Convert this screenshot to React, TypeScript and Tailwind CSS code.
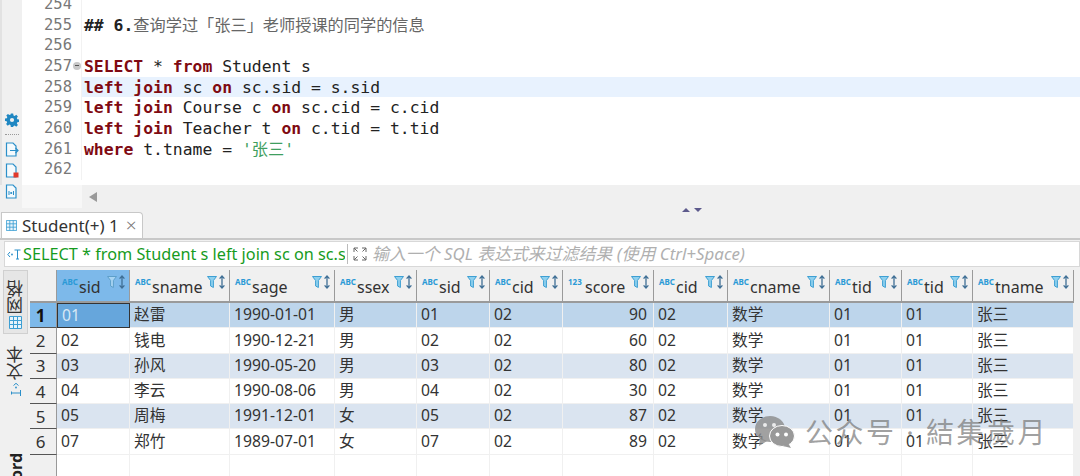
import React from "react";

const mono = "font-['DejaVu_Sans_Mono','Noto_Sans_CJK_SC',monospace]";
const ui = "font-['Noto_Sans','Noto_Sans_CJK_SC',sans-serif]";
const gridCols = "grid-cols-[27px_73px_100px_105px_82px_73px_73px_91px_74px_102px_72px_71px_101px]";

const K = ({ children }: { children: React.ReactNode }) => (
  <span className="font-bold text-[#7f0a12]">{children}</span>
);

const lines: { n: number; fold?: boolean; active?: boolean; c?: React.ReactNode }[] = [
  { n: 254 },
  { n: 255, c: <><span className="font-bold text-[#222]">## 6.</span><span className="text-[16.2px] text-[#666]">查询学过「张三」老师授课的同学的信息</span></> },
  { n: 256 },
  { n: 257, fold: true, c: <><K>SELECT</K> * <K>from</K> Student s</> },
  { n: 258, active: true, c: <><K>left join</K> sc <K>on</K> sc.sid = s.sid</> },
  { n: 259, c: <><K>left join</K> Course c <K>on</K> sc.cid = c.cid</> },
  { n: 260, c: <><K>left join</K> Teacher t <K>on</K> c.tid = t.tid</> },
  { n: 261, c: <><K>where</K> t.tname = <span className="text-[#3f9f5f]">'<span className="text-[16.2px]">张三</span>'</span></> },
  { n: 262 },
];

const columns: { name: string; kind?: string }[] = [
  { name: "sid" }, { name: "sname" }, { name: "sage" }, { name: "ssex" }, { name: "sid" }, { name: "cid" },
  { name: "score", kind: "123" }, { name: "cid" }, { name: "cname" }, { name: "tid" }, { name: "tid" }, { name: "tname" },
];

const rows = [
  ["01", "赵雷", "1990-01-01", "男", "01", "02", "90", "02", "数学", "01", "01", "张三"],
  ["02", "钱电", "1990-12-21", "男", "02", "02", "60", "02", "数学", "01", "01", "张三"],
  ["03", "孙风", "1990-05-20", "男", "03", "02", "80", "02", "数学", "01", "01", "张三"],
  ["04", "李云", "1990-08-06", "男", "04", "02", "30", "02", "数学", "01", "01", "张三"],
  ["05", "周梅", "1991-12-01", "女", "05", "02", "87", "02", "数学", "01", "01", "张三"],
  ["07", "郑竹", "1989-07-01", "女", "07", "02", "89", "02", "数学", "01", "01", "张三"],
];

const rowBg = ["bg-[#bdd5eb]", "bg-white", "bg-[#dae4f0]", "bg-white", "bg-[#dae4f0]", "bg-white"];

const FilterSort = ({ hollow }: { hollow?: boolean }) => (
  <svg width="19" height="14" viewBox="0 0 19 14" className="shrink-0">
    <path d="M0.500 1.500H9.500L6.400 5.500V12.500L3.600 11V5.500Z" fill={hollow ? "#a8d4f2" : "#8fd0ee"} stroke={hollow ? "#5d9fca" : "#3d9fd3"} />
    <path d="M15 1V13M12.600 3.600L15 1L17.400 3.600M12.600 10.400L15 13L17.400 10.400" fill="none" stroke="#3f6f95" strokeWidth="1.300" />
  </svg>
);

const GridIcon = ({ size = 13, color = "#3d9fd3" }: { size?: number; color?: string }) => (
  <svg width={size} height={size} viewBox="0 0 13 13" className="shrink-0">
    <path d="M0.500 0.500H12.500V12.500H0.500ZM0.500 4.500H12.500M0.500 8.500H12.500M4.500 0.500V12.500M8.500 0.500V12.500" fill="#e8f4fb" stroke={color} />
  </svg>
);

const Gear = () => (
  <svg width="14" height="14" viewBox="0 0 24 24" className="shrink-0">
    <path
      fill="#1f87c2"
      d="M10 1h4l.6 3.200 2 .8L19.300 3.200l2.800 2.800-1.800 2.700.8 2 3.200.6v4l-3.200.6-.8 2 1.800 2.700-2.800 2.800-2.700-1.800-2 .8L14 23.900h-4l-.6-3.200-2-.8-2.700 1.800-2.800-2.800 1.800-2.700-.8-2L0 13.600v-4l3.200-.6.8-2L2.200 4.300 5 1.500l2.700 1.800 2-.8Z"
    />
    <circle cx="12" cy="12" r="3.600" fill="#f0f0f0" />
  </svg>
);

const DocIcon = ({ variant }: { variant: "arrow" | "error" | "var" }) => (
  <svg width="14" height="15" viewBox="0 0 14 15" className="shrink-0">
    <path d="M1.500 1H8L11 4V14H1.500Z" fill="#f4fafd" stroke="#2b8fc9" strokeWidth="1.200" />
    {variant === "arrow" && <path d="M5 8.500H13M10.500 6L13 8.500L10.500 11" fill="none" stroke="#2b8fc9" strokeWidth="1.200" />}
    {variant === "error" && <rect x="8.500" y="9.500" width="5" height="5" fill="#e0392b" />}
    {variant === "var" && <path d="M4 7V11M8.500 7V11M5.500 8L7 10M7 8L5.500 10" fill="none" stroke="#2b8fc9" />}
  </svg>
);

const ExpandIcon = () => (
  <svg width="14" height="14" viewBox="0 0 14 14" className="shrink-0">
    <path d="M1 5V1H5M1 1L4.500 4.500M9 1H13V5M13 1L9.500 4.500M1 9V13H5M1 13L4.500 9.500M13 9V13H9M13 13L9.500 9.500" fill="none" stroke="#666" />
  </svg>
);

const TextIcon = () => (
  <svg width="14" height="11" viewBox="0 0 14 11" className="shrink-0">
    <path d="M3 3L0.800 5.500L3 8" fill="none" stroke="#2b8fc9" />
    <circle cx="5" cy="5.500" r="0.900" fill="#2b8fc9" />
    <path d="M7.500 1H13.500M10.500 1V10M9 10H12" fill="none" stroke="#2b8fc9" />
  </svg>
);

const Wechat = () => (
  <svg width="40" height="33" viewBox="0 0 40 33">
    <ellipse cx="15" cy="13" rx="15" ry="13" fill="#8a8a8a" fillOpacity="0.8" />
    <path d="M5 22L4 30L12 25Z" fill="#8a8a8a" fillOpacity="0.8" />
    <ellipse cx="27" cy="20" rx="12.500" ry="10.500" fill="#999" stroke="#fff" />
    <path d="M33 27L36 32L28 30Z" fill="#999" />
    <circle cx="22.500" cy="18.500" r="2" fill="#fff" />
    <circle cx="31" cy="18.500" r="2" fill="#fff" />
    <circle cx="10" cy="9" r="2" fill="#fff" fillOpacity="0.8" />
    <circle cx="19" cy="9" r="2" fill="#fff" fillOpacity="0.8" />
  </svg>
);

export default function App() {
  return (
    <div className={`relative flex h-[476px] w-[1080px] flex-col overflow-hidden bg-[#f0f0f0] ${ui}`}>
      {/* Editor */}
      <div className="flex h-[185px] shrink-0">
        <div className="flex w-[22px] shrink-0 flex-col items-center border-l-2 border-[#e2e2e2] bg-[#f0f0f0] pr-[1px] pt-[113px]">
          <Gear />
          <div className="mt-[7px] h-[1px] w-[14px] border-t border-dotted border-[#999]" />
          <div className="mt-[7px] flex flex-col gap-[6px]">
            <DocIcon variant="arrow" />
            <DocIcon variant="error" />
            <DocIcon variant="var" />
          </div>
        </div>
        <div className={`-mt-[6px] flex min-w-0 flex-1 flex-col overflow-hidden bg-white text-[16.4px] leading-[20.67px] text-[#222] ${mono}`}>
          {lines.map((l) => (
            <div key={l.n} className="flex h-[20.67px] shrink-0">
              <div className="relative w-[60px] shrink-0 border-r border-[#f2f2f2] pr-[9px] text-right text-[#787878]">
                <span className="text-[15.5px]">{l.n}</span>
                {l.fold && (
                  <span className="absolute right-0 top-[6px] flex h-[8px] w-[8px] items-center justify-center rounded-full bg-[#c8c8c8]">
                    <span className="h-[1px] w-[4px] bg-[#555]" />
                  </span>
                )}
              </div>
              <div className={`flex-1 whitespace-pre pl-[2px] pt-[1px] ${l.active ? "bg-[#e8f2fe]" : ""}`}>{l.c}</div>
            </div>
          ))}
        </div>
      </div>

      {/* Horizontal scrollbar */}
      <div className="flex h-[20px] shrink-0 pl-[22px]">
        <div className="h-[23px] w-[60px] shrink-0 bg-[#f7f7f7]" />
        <div className="flex flex-1 items-start pl-[7px] pt-[7px]">
          <div className="h-0 w-0 border-y-[5px] border-r-[8px] border-y-transparent border-r-[#9a9a9a]" />
        </div>
      </div>

      {/* Sash + tab strip */}
      <div className="relative flex h-[35px] shrink-0 items-end border-b-2 border-[#c8c8c8]">
        <div className="ml-[1px] flex h-[26px] w-[142px] items-center gap-[5px] rounded-tr-[4px] border-x border-t border-[#c8c8c8] bg-white pl-[4px] text-[17px] leading-none text-[#333]">
          <GridIcon size={11} />
          <span className="whitespace-nowrap">Student(+) 1</span>
          <span className="ml-[2px] text-[19px] font-light text-[#777]">×</span>
        </div>
        <div className="absolute left-[682px] top-[3px] flex gap-[4px]">
          <div className="h-0 w-0 border-x-[4px] border-b-[4px] border-x-transparent border-b-[#5d5a8c]" />
          <div className="h-0 w-0 border-x-[4px] border-t-[4px] border-x-transparent border-t-[#5d5a8c]" />
        </div>
      </div>

      {/* Filter bar */}
      <div className="ml-[4px] mt-[1px] flex h-[26px] shrink-0 items-center border border-[#d8d8d8] bg-white">
        <span className="flex w-[18px] shrink-0 justify-center">
          <TextIcon />
        </span>
        <div className="w-[322px] shrink-0 overflow-hidden whitespace-nowrap text-[16.25px] leading-[22px] text-[#169b1e]">
          SELECT * from Student s left join sc on sc.sid = s.sid
        </div>
        <div className="ml-[2px] mr-[5px] h-[20px] w-[1px] bg-[#bbb]" />
        <ExpandIcon />
        <span className="ml-[5px] whitespace-nowrap text-[16.9px] italic leading-none text-[#b0b0b0]">
          输入一个 SQL 表达式来过滤结果 (使用 Ctrl+Space)
        </span>
      </div>

      {/* Results */}
      <div className="mt-[3px] flex min-h-0 flex-1">
        <div className="flex w-[30px] shrink-0 flex-col bg-[#f0f0f0] pl-[3px]">
          <div className="flex h-[64px] w-[25px] shrink-0 flex-col items-center gap-[2px] border border-[#d0d0d0] bg-[#e6e6e6] pt-[9px]">
            <span className="rotate-180 text-[17px] leading-[18px] text-[#333] [writing-mode:vertical-rl]">网格</span>
            <GridIcon size={13} />
          </div>
          <div className="mt-[12px] flex w-[25px] shrink-0 flex-col items-center gap-[4px]">
            <span className="rotate-180 text-[17px] leading-[18px] text-[#333] [writing-mode:vertical-rl]">文本</span>
            <span className="rotate-90"><TextIcon /></span>
          </div>
          <div className="mt-[58px] flex w-[25px] shrink-0 justify-center">
            <span className="rotate-180 text-[16px] font-bold leading-[18px] text-[#222] [writing-mode:vertical-rl]">Record</span>
          </div>
        </div>

        <div className="min-w-0 flex-1">
          <div className={`grid h-[33px] ${gridCols}`}>
            <div className="border-b-2 border-r border-[#9a9a9a] bg-[#f0f0f0]" />
            {columns.map((c, i) => (
              <div
                key={i}
                className={`flex items-center border-b-2 border-r border-[#9a9a9a] pl-[5px] pr-[3px] ${i === 0 ? "bg-[#7db9ea]" : "bg-[#f0f0f0]"}`}
              >
                <span className="mb-[8px] w-[17px] shrink-0 text-[8px] font-bold leading-none text-[#2b9ad6]">
                  {c.kind ?? "ABC"}
                </span>
                <span className="mt-[2px] flex-1 text-[16px] leading-none text-[#333]">{c.name}</span>
                <span className="mb-[7px]"><FilterSort hollow={i === 0} /></span>
              </div>
            ))}
          </div>

          {rows.map((r, ri) => (
            <div key={ri} className={`grid h-[25.3px] ${gridCols}`}>
              <div
                className={`flex items-center justify-center border-b border-r border-b-[#555] border-r-[#999] pr-[5px] text-[17px] leading-none ${ri === 0 ? "bg-[#7db9ea] font-bold text-[#111]" : "bg-[#f0f0f0] text-[#333]"}`}
              >
                {ri + 1}
              </div>
              {r.map((v, ci) => (
                <div
                  key={ci}
                  className={`flex items-center whitespace-nowrap border-b border-r border-[#f0f0f0] pl-[4px] pr-[6px] text-[15.7px] leading-none ${rowBg[ri]} ${ci === 6 ? "justify-end" : ""} ${ri === 0 && ci === 0 ? "!border !border-[#333] !bg-[#66a6dc] text-[#d8e8f5]" : "text-[#333]"}`}
                >
                  {v}
                </div>
              ))}
            </div>
          ))}

          <div className={`grid h-[22px] ${gridCols}`}>
            <div className="border-r border-[#999] bg-[#f0f0f0]" />
            {columns.map((c, i) => (
              <div key={i} className="border-r border-[#f0f0f0] bg-white" />
            ))}
          </div>
        </div>
      </div>

      {/* Watermark */}
      <div className="absolute left-[755px] top-[416px] flex items-center gap-[10px]">
        <Wechat />
        <span className="whitespace-nowrap text-[28px] leading-[33px] tracking-[2.500px] text-[#777]/70">公众号 · 結集歲月</span>
      </div>
    </div>
  );
}
